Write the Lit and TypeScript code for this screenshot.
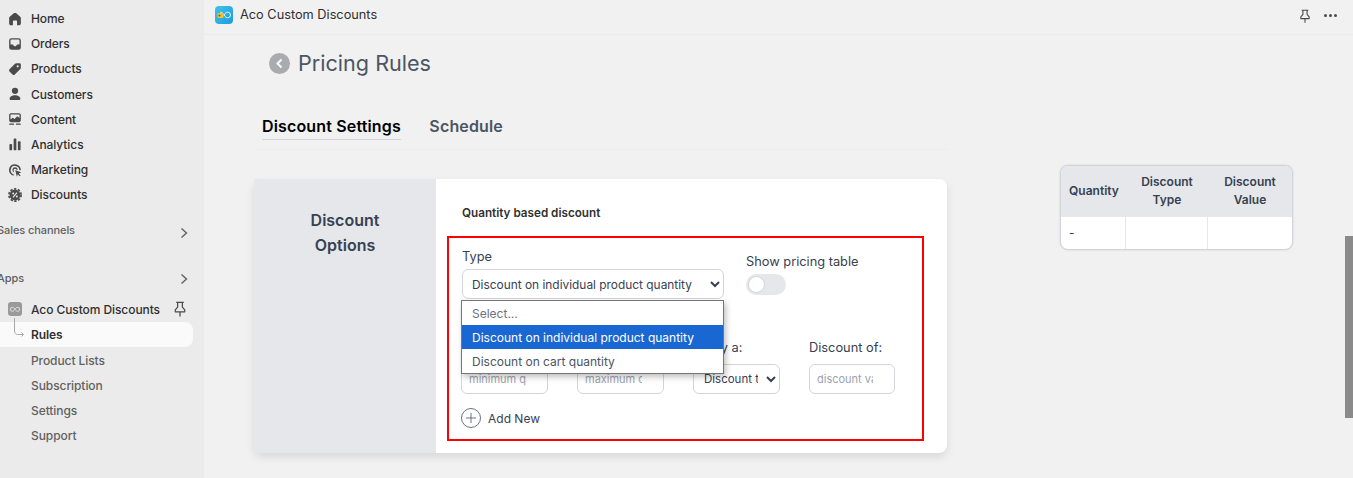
import { LitElement, html, css, svg } from "lit";
import { customElement } from "lit/decorators.js";

const ic = (body: unknown) => html`<svg class="ic" viewBox="0 0 20 20" fill="#4a4a4a">${body}</svg>`;
const icons: Record<string, unknown> = {
  home: ic(svg`<path d="M10 3.200c-.5 0-1 .2-1.400.5L4.200 7.500c-.5.4-.7.9-.7 1.500v6c0 1.100.9 2 2 2h2.200v-4.200c0-.7.5-1.200 1.200-1.200h2.200c.7 0 1.200.5 1.200 1.200V17h2.200c1.100 0 2-.9 2-2V9c0-.6-.2-1.100-.7-1.500l-4.400-3.800c-.4-.3-.9-.5-1.400-.5z"/>`),
  orders: ic(svg`<path fill-rule="evenodd" d="M6 3.500h8A2.500 2.500 0 0 1 16.500 6v8a2.500 2.500 0 0 1-2.500 2.500H6A2.500 2.500 0 0 1 3.500 14V6A2.500 2.500 0 0 1 6 3.500zM5 6v4.500h2.300c.5 0 .9.300 1 .8.200.700.900 1.200 1.700 1.200s1.500-.5 1.700-1.200c.1-.5.500-.8 1-.8H15V6c0-.6-.4-1-1-1H6c-.6 0-1 .4-1 1z"/>`),
  products: ic(svg`<path fill-rule="evenodd" d="M11.500 3.500H15A1.500 1.500 0 0 1 16.500 5v3.500c0 .6-.2 1.100-.6 1.500l-6.100 6.100a1.800 1.800 0 0 1-2.500 0l-3.400-3.400a1.800 1.800 0 0 1 0-2.500L10 4.100c.4-.4.900-.6 1.500-.6zM13 8.200a1.200 1.200 0 1 0 0-2.400 1.200 1.200 0 0 0 0 2.400z"/>`),
  customers: ic(svg`<circle cx="10" cy="6.500" r="3.500"/><path d="M10 11.500c-3.500 0-6 1.900-6 3.800 0 .9.700 1.400 1.500 1.400h9c.8 0 1.500-.5 1.500-1.400 0-1.900-2.500-3.800-6-3.800z"/>`),
  content: ic(svg`<path fill-rule="evenodd" d="M5.500 3.500h9c1.100 0 2 .9 2 2v6c0 1.100-.9 2-2 2h-9c-1.100 0-2-.9-2-2v-6c0-1.100.9-2 2-2zM5 10.500l2.500-2 2 1.500 3-3 2.500 2V5.500c0-.3-.2-.5-.5-.5h-9c-.3 0-.5.200-.5.500z"/><rect x="3.500" y="15" width="5.500" height="1.500" rx=".7"/><rect x="11" y="15" width="5.500" height="1.500" rx=".7"/>`),
  analytics: ic(svg`<rect x="3.800" y="10" width="3" height="7" rx="1"/><rect x="8.500" y="4" width="3" height="13" rx="1"/><rect x="13.200" y="7" width="3" height="10" rx="1"/>`),
  marketing: ic(svg`<path d="M10 3.500a6.500 6.500 0 0 0-1.300 12.900l-.4-1.700A4.800 4.800 0 1 1 14.800 10l1.700.300A6.500 6.500 0 0 0 10 3.500z"/><path d="M10 7a3 3 0 0 0-1 5.800l-.4-1.600A1.500 1.500 0 1 1 11.400 9.500l1.600.4A3 3 0 0 0 10 7z"/><path d="M10.300 10.200l6.700 2.300-2.800 1.300 2 2.200-1.100 1-2-2.200-1 2.700z"/>`),
  discounts: ic(svg`<circle cx="10" cy="10" r="6"/><circle cx="10" cy="10" r="6.800" fill="none" stroke="#4a4a4a" stroke-width="1.800" stroke-dasharray="2.600 1.700"/><path d="M7.800 12.600l4.400-5.200" stroke="#ebebeb" stroke-width="1.300" fill="none"/><circle cx="8" cy="8.300" r="1.100" fill="#ebebeb"/><circle cx="12" cy="11.700" r="1.100" fill="#ebebeb"/>`),
};

const chevron = html`<svg class="chev" viewBox="0 0 10 14" fill="none" stroke="#616161" stroke-width="1.400"><path d="M2.500 2.500 7.500 7l-5 4.500"/></svg>`;
const pin = html`<svg class="pin" viewBox="0 0 14 18" fill="none" stroke="#4a4a4a" stroke-width="1.300" stroke-linejoin="round"><path d="M3 1.500h8M4.500 1.500v5L2 9.500v2h10v-2L9.500 6.500v-5M7 11.500v5"/></svg>`;
const infinity = (c: string, w: number) => html`<svg viewBox="0 0 18 10" width=${w} fill="none" stroke=${c} stroke-width="1.300"><path d="M9 5C7.500 2.800 6.500 2 5 2a3 3 0 0 0 0 6c1.500 0 2.500-.8 4-3s2.500-3 4-3a3 3 0 0 1 0 6c-1.500 0-2.500-.8-4-3z"/></svg>`;
const logoMark = html`<svg viewBox="0 0 18 18" width="18" height="18" fill="none"><path stroke="#eaf8fe" stroke-width="1" d="M9 9c1.300-2 2.300-2.800 3.700-2.800a2.800 2.800 0 0 1 0 5.600c-1.400 0-2.400-.8-3.700-2.800s-2.300-2.800-3.700-2.800"/><rect x="2.500" y="7" width="6" height="5" rx="1.200" fill="#f0c23a"/><circle cx="4.500" cy="9.500" r="1" fill="#6a5a2a"/></svg>`;

@customElement("app-root")
export class AppRoot extends LitElement {
  static styles = css`
    :host { display: block; width: 1353px; height: 478px; overflow: hidden; font-family: Inter, "Liberation Sans", sans-serif; color: #303030; position: relative; background: #f1f1f1; }
    * { box-sizing: border-box; }
    .frame { display: flex; height: 478px; }
    .side { width: 204px; flex: none; background: #ebebeb; padding-top: 6px; font-size: 12px; font-weight: 450; letter-spacing: -.080px; color: #303030; overflow: hidden; }
    .nav { display: flex; align-items: center; height: 25.200px; padding-left: 31px; position: relative; }
    .ic { position: absolute; left: 6px; top: 3.500px; width: 18px; height: 18px; }
    .group { display: flex; align-items: center; justify-content: space-between; margin-left: -3px; padding-right: 15px; font-size: 11px; color: #616161; height: 20px; }
    .chev { width: 10px; height: 14px; }
    .g1 .chev { margin-top: 7px; }
    .g2 .chev { margin-top: 3px; }
    .g1 { margin-top: 12px; }
    .g2 { margin-top: 28px; }
    .app { display: flex; align-items: center; height: 25px; padding-left: 31px; margin-top: 9px; position: relative; }
    .app .tile { position: absolute; left: 8px; top: 5.500px; width: 14px; height: 14px; border-radius: 3px; background: #9a9a9a; display: flex; align-items: center; justify-content: center; }
    .app .name { flex: 1; }
    .pin { width: 14px; height: 17px; margin-right: 17px; }
    .rules { display: flex; align-items: center; height: 25px; width: 193px; padding-left: 31px; background: #fafafa; border-radius: 0 8px 8px 0; font-weight: 600; position: relative; }
    .rules svg { position: absolute; left: 13px; top: -4px; width: 13px; height: 20px; }
    .sub { display: flex; align-items: center; height: 25.100px; padding-left: 31px; color: #616161; }
    .sub.first { margin-top: 1.500px; }

    .main { flex: 1; min-width: 0; }
    .top { height: 35px; border-bottom: 1px solid #ebebeb; display: flex; align-items: center; padding: 0 16px 5px 11px; font-size: 12.750px; color: #303030; }
    .logo { width: 18px; height: 18px; border-radius: 4px; background: linear-gradient(135deg, #3fc4e8, #1e9bdf); display: flex; align-items: center; justify-content: center; margin-right: 7px; }
    .top .t { flex: 1; }
    .top .pin { width: 12px; height: 15px; margin: 3px 13px 0 0; }
    .dots { display: flex; gap: 2px; margin-top: 1px; }
    .dots i { width: 3px; height: 3px; border-radius: 50%; background: #4a4a4a; }
    .content { display: flex; padding-left: 50px; }
    .col { width: 693px; flex: none; }
    .head { display: flex; align-items: center; gap: 8px; margin: 12px 0 0 15px; height: 32px; font-size: 21.600px; color: #4b5563; }
    .back { width: 21px; height: 21px; border-radius: 50%; background: #a9abae; display: flex; align-items: center; justify-content: center; }
    .tabs { display: flex; gap: 28.500px; margin-top: 30px; padding-left: 8px; height: 41px; font-size: 16px; letter-spacing: .150px; font-weight: 600; border-bottom: 1px solid #ececec; color: #4b5563; }
    .tab { height: 31px; padding-top: 5px; line-height: 24px; }
    .tab.on { color: #000; border-bottom: 1px solid #d1d5db; }
    .card { display: flex; margin-top: 29px; width: 693px; height: 274px; border-radius: 8px; background: #fff; box-shadow: 0 4px 8px rgba(0,0,0,.1); }
    .opt { width: 182px; flex: none; background: #e5e7eb; padding-top: 29px; text-align: center; font-size: 16px; line-height: 25px; font-weight: 600; color: #374151; }
    .body { flex: 1; padding: 26px 23px 0 11px; position: relative; }
    .qb { font-size: 11.700px; font-weight: 600; color: #303030; padding-left: 15px; height: 16px; line-height: 16px; }
    .box { margin-top: 15px; height: 205px; border: 2px solid #f00; padding: 9px 13px 0 12px; width: 477px; position: relative; font-size: 12.800px; color: #374151; }
    .r1 { display: flex; gap: 22px; height: 92px; }
    .type { width: 263px; padding-left: 1px; }
    label { display: block; height: 20px; line-height: 20px; font-size: 12.800px; }
    .type label { height: 22px; }
    select, input { font-family: inherit; font-size: 11.900px; color: #374151; background: #fff; border: 1px solid #d1d5db; border-radius: 6px; outline: none; }
    .sel { width: 262px; height: 30px; padding: 0 6px 0 5px; display: block; }
    .toggleCol label { margin-top: 5px; height: 19px; }
    .toggle { width: 40px; height: 21px; border-radius: 11px; background: #e5e7eb; margin-top: 3px; padding: 2px; }
    .toggle i { display: block; width: 17px; height: 17px; border-radius: 50%; background: #fff; border: 1px solid #d1d5db; }
    .r2 { display: grid; grid-template-columns: 87px 87px 87px 86px; column-gap: 29px; }
    .r2 label { height: 26px; line-height: 20px; margin-top: -1px; }
    .r2 input { width: 100%; height: 30px; padding: 0 21px 0 7px; display: block; font-size: 11px; }
    .r2 input::placeholder { color: #9ca3af; opacity: 1; }
    .r2 select { width: 100%; height: 30px; padding: 0 5px 0 6px; display: block; font-size: 11.500px; }
    .add { display: flex; align-items: center; gap: 7px; margin-top: 14px; height: 20px; font-size: 12px; color: #374151; }
    .add svg { width: 20px; height: 20px; }
    .drop { position: absolute; left: 12px; top: 62px; width: 263px; height: 74px; background: #fff; border: 1px solid #767676; box-shadow: 2px 3px 6px rgba(0,0,0,.25); font-size: 12px; color: #4b5563; }
    .drop div { height: 24px; line-height: 26px; padding-left: 10px; }
    .drop .ph { color: #6b7280; }
    .drop .hi { background: #1967d2; color: #fff; }
    .tbl { margin: 130px 0 0 113px; width: 233px; height: 85px; border: 1px solid #d1d5db; border-radius: 8px; overflow: hidden; background: #fff; font-size: 12px; display: flex; flex-direction: column; flex: none; box-shadow: 0 0 2px rgba(0,0,0,.15); }
    .tr { display: grid; grid-template-columns: 65px 82px 1fr; }
    .th { height: 51px; background: #e5e7eb; font-weight: 600; color: #374151; line-height: 18px; text-align: center; }
    .th span { display: flex; align-items: center; justify-content: center; padding-bottom: 2px; }
    .th span:first-child { padding-left: 1px; }
    .td { height: 32px; }
    .td span { display: flex; align-items: center; padding: 0 0 2px 8px; border-right: 1px solid #e5e7eb; color: #374151; }
    .td span:last-child { border-right: none; }
    .thumb { position: absolute; right: 0; top: 236px; width: 8px; height: 182px; background: #8a8a8a; }
  `;

  render() {
    const items: [string, string][] = [["home", "Home"], ["orders", "Orders"], ["products", "Products"], ["customers", "Customers"], ["content", "Content"], ["analytics", "Analytics"], ["marketing", "Marketing"], ["discounts", "Discounts"]];
    return html`
      <div class="frame">
        <nav class="side">
          ${items.map(([k, t]) => html`<div class="nav">${icons[k]}${t}</div>`)}
          <div class="group g1"><span>Sales channels</span>${chevron}</div>
          <div class="group g2"><span>Apps</span>${chevron}</div>
          <div class="app"><span class="tile">${infinity("#e8e8e8", 12)}</span><span class="name">Aco Custom Discounts</span>${pin}</div>
          <div class="rules"><svg viewBox="0 0 13 20" fill="none" stroke="#a8a8a8" stroke-width="1"><path d="M1.500 0v13c0 2 1 3.500 3 3.500h6M8.500 14.500l2 2-2 2"/></svg>Rules</div>
          <div class="sub first">Product Lists</div>
          <div class="sub">Subscription</div>
          <div class="sub">Settings</div>
          <div class="sub">Support</div>
        </nav>
        <main class="main">
          <header class="top">
            <span class="logo">${logoMark}</span>
            <span class="t">Aco Custom Discounts</span>
            ${pin}
            <span class="dots"><i></i><i></i><i></i></span>
          </header>
          <div class="content">
            <div class="col">
              <div class="head">
                <span class="back"><svg width="9" height="11" viewBox="0 0 9 11" fill="none" stroke="#fff" stroke-width="2"><path d="M6.500 1.500 2.500 5.500l4 4"/></svg></span>
                Pricing Rules
              </div>
              <div class="tabs"><div class="tab on">Discount Settings</div><div class="tab">Schedule</div></div>
              <section class="card">
                <div class="opt">Discount<br />Options</div>
                <div class="body">
                  <div class="qb">Quantity based discount</div>
                  <div class="box">
                    <div class="r1">
                      <div class="type">
                        <label>Type</label>
                        <select class="sel"><option>Discount on individual product quantity</option></select>
                      </div>
                      <div class="toggleCol">
                        <label>Show pricing table</label>
                        <div class="toggle"><i></i></div>
                      </div>
                    </div>
                    <div class="r2">
                      <div><label>&nbsp;</label><input placeholder="minimum quantity" /></div>
                      <div><label>&nbsp;</label><input placeholder="maximum quantity" /></div>
                      <div><label>Apply a:</label><select><option>Discount type</option></select></div>
                      <div><label>Discount of:</label><input placeholder="discount value" /></div>
                    </div>
                    <div class="add">
                      <svg viewBox="0 0 20 20" fill="none" stroke="#6b7280" stroke-width="1"><circle cx="10" cy="10" r="9.500"/><path d="M10 5v10M5 10h10"/></svg>
                      Add New
                    </div>
                    <div class="drop">
                      <div class="ph">Select...</div>
                      <div class="hi">Discount on individual product quantity</div>
                      <div>Discount on cart quantity</div>
                    </div>
                  </div>
                </div>
              </section>
            </div>
            <div class="tbl">
              <div class="tr th"><span>Quantity</span><span>Discount<br />Type</span><span>Discount<br />Value</span></div>
              <div class="tr td"><span>-</span><span></span><span></span></div>
            </div>
          </div>
        </main>
      </div>
      <div class="thumb"></div>
    `;
  }
}
